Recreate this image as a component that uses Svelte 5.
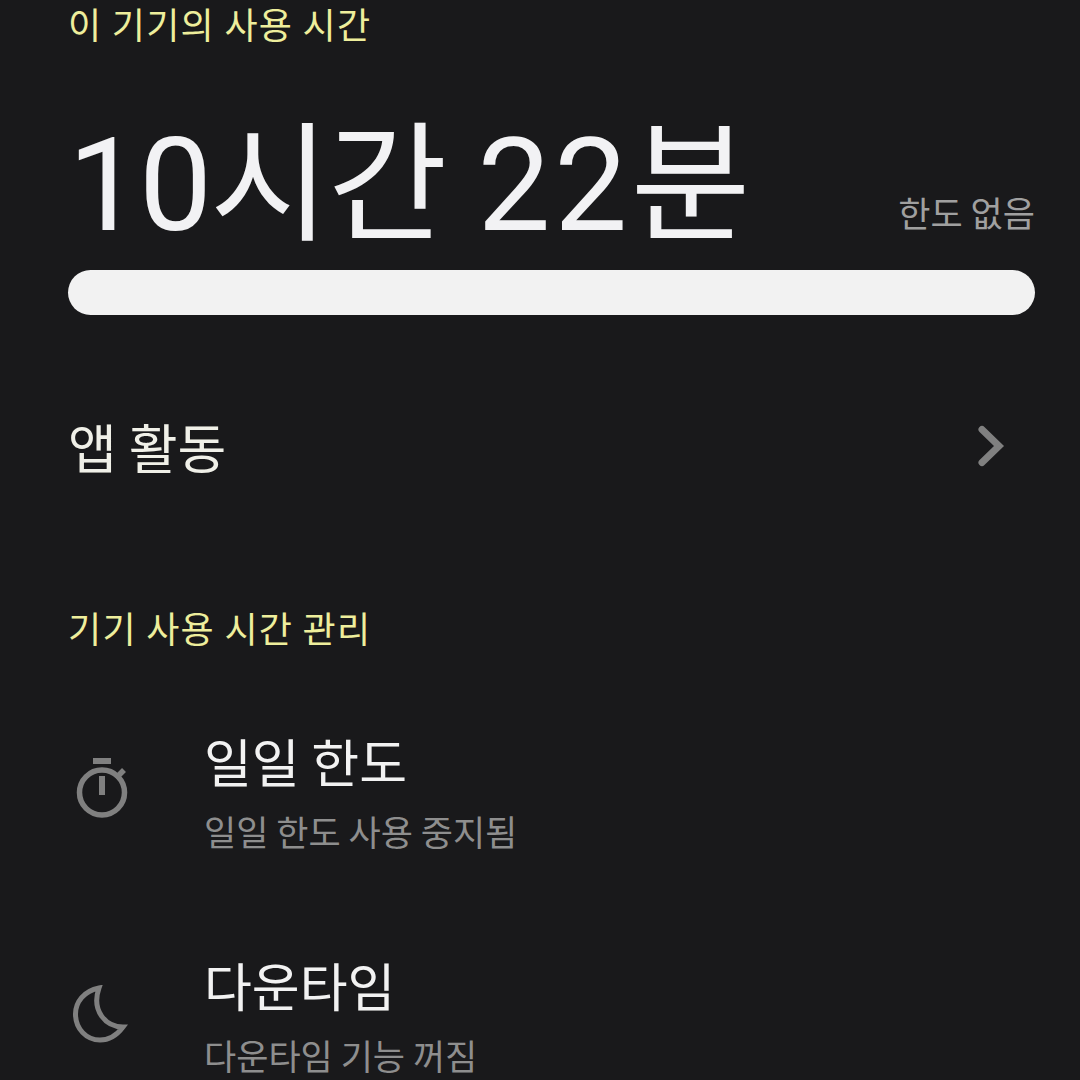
<script>
  const rows = [
    { icon: 'timer', title: '일일 한도', sub: '일일 한도 사용 중지됨' },
    { icon: 'moon', title: '다운타임', sub: '다운타임 기능 꺼짐' }
  ];
</script>

<div class="screen">
  <h2 class="section">이 기기의 사용 시간</h2>

  <div class="usage">
    <div class="big"><span class="hours">10시간</span> <span class="mins">22분</span></div>
    <div class="limit">한도 없음</div>
  </div>
  <div class="bar"></div>

  <div class="activity">
    <span>앱 활동</span>
    <svg class="chevron" viewBox="0 0 32 44" width="32" height="44" fill="none" stroke="#808080" stroke-width="7" stroke-linecap="round">
      <path d="M7 5.500l17 16.500L7 38.500" />
    </svg>
  </div>

  <h2 class="section second">기기 사용 시간 관리</h2>

  <div class="list">
    {#each rows as row}
      <div class="row">
        <div class="icon">
          {#if row.icon === 'timer'}
            <svg viewBox="0 0 60 68" width="60" height="68" fill="none" stroke="#808080" stroke-width="5.500">
              <path d="M21 3h18" stroke-width="6" />
              <circle cx="30" cy="34.500" r="22.500" />
              <path d="M30 18v19" stroke-width="6" />
              <path d="M44 20l8-8" stroke-width="5.500" />
            </svg>
          {:else}
            <svg viewBox="0 0 60 62" width="60" height="62" fill="none" stroke="#808080" stroke-width="5" stroke-linejoin="miter">
              <path d="M27 3C12 6 3.500 17 3.500 29c0 15 11 26 24.500 26 9 0 17-5 23-13C34 42 19 26 27 3z" />
            </svg>
          {/if}
        </div>
        <div class="text">
          <div class="title">{row.title}</div>
          <div class="sub">{row.sub}</div>
        </div>
      </div>
    {/each}
  </div>
</div>

<style>
  :global(body) {
    margin: 0;
    background: #19191b;
  }
  .screen {
    width: 1080px;
    height: 1080px;
    overflow: hidden;
    box-sizing: border-box;
    padding: 0 45px 0 68px;
    background: #19191b;
    color: #f2f2f4;
    font-family: "Noto Sans CJK KR", "Noto Sans", sans-serif;
  }
  .section {
    margin: 0;
    font-size: 36px;
    font-weight: 400;
    line-height: 46px;
    letter-spacing: 1.3px;
    color: #eeee9c;
  }
  .usage {
    display: flex;
    justify-content: space-between;
    align-items: flex-end;
    margin-top: 70px;
    height: 140px;
  }
  .big {
    font-size: 130px;
    line-height: 140px;
    font-family: Roboto, "Noto Sans CJK KR", sans-serif;
    font-weight: 400;
  }
  .hours {
    letter-spacing: -2px;
  }
  .mins {
    letter-spacing: 3.5px;
  }
  .limit {
    font-size: 35px;
    line-height: 50px;
    margin-bottom: 19px;
    color: #a0a0a0;
  }
  .bar {
    height: 45px;
    margin-top: 14px;
    border-radius: 23px;
    background: #f2f2f2;
  }
  .activity {
    display: flex;
    justify-content: space-between;
    align-items: center;
    margin-top: 100px;
    padding-right: 28px;
    height: 62px;
    font-size: 53px;
    color: #f0f0e8;
  }
  .second {
    margin-top: 127px;
  }
  .list {
    margin-top: 30px;
  }
  .row {
    display: flex;
    align-items: center;
    height: 224px;
  }
  .icon {
    width: 136px;
    display: flex;
    align-items: center;
    padding-left: 4px;
    box-sizing: border-box;
  }
  .title {
    font-size: 52px;
    line-height: 62px;
    color: #f2f2f2;
  }
  .sub {
    font-size: 35px;
    line-height: 46px;
    margin-top: 16px;
    color: #8e8e8e;
  }
</style>
